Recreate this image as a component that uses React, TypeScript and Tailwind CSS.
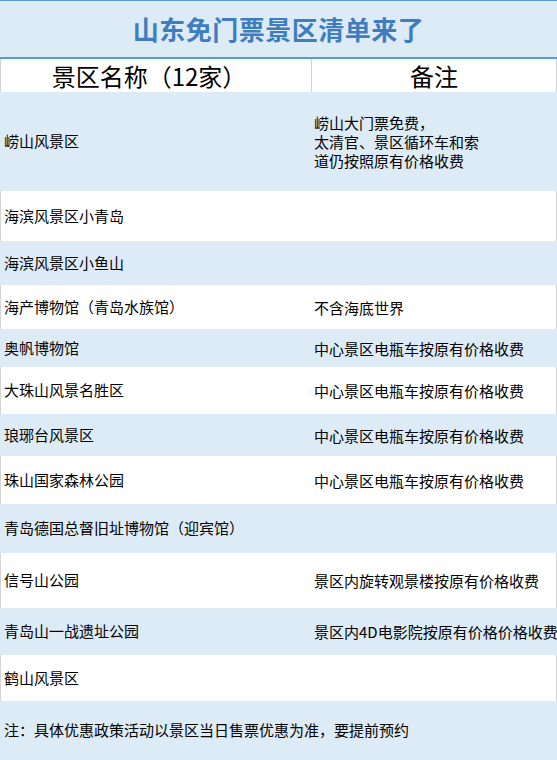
import React from "react";

interface Row {
  name: string;
  note: string[];
  h: string;
  blue: boolean;
}

const rows: Row[] = [
  {
    name: "崂山风景区",
    note: ["崂山大门票免费，", "太清官、景区循环车和索", "道仍按照原有价格收费"],
    h: "h-[99px]",
    blue: true,
  },
  { name: "海滨风景区小青岛", note: [], h: "h-[50px]", blue: false },
  { name: "海滨风景区小鱼山", note: [], h: "h-[44px]", blue: true },
  { name: "海产博物馆（青岛水族馆）", note: ["不含海底世界"], h: "h-[44px]", blue: false },
  { name: "奥帆博物馆", note: ["中心景区电瓶车按原有价格收费"], h: "h-[38px]", blue: true },
  { name: "大珠山风景名胜区", note: ["中心景区电瓶车按原有价格收费"], h: "h-[47px]", blue: false },
  { name: "琅琊台风景区", note: ["中心景区电瓶车按原有价格收费"], h: "h-[42px]", blue: true },
  { name: "珠山国家森林公园", note: ["中心景区电瓶车按原有价格收费"], h: "h-[48px]", blue: false },
  { name: "青岛德国总督旧址博物馆（迎宾馆）", note: [], h: "h-[49px]", blue: true },
  { name: "信号山公园", note: ["景区内旋转观景楼按原有价格收费"], h: "h-[55px]", blue: false },
  { name: "青岛山一战遗址公园", note: ["景区内4D电影院按原有价格价格收费"], h: "h-[47px]", blue: true },
  { name: "鹤山风景区", note: [], h: "h-[46px]", blue: false },
];

export default function App() {
  return (
    <div
      className="w-[557px] h-[760px] overflow-hidden bg-white text-black"
      style={{ fontFamily: '"Noto Sans CJK SC", "Noto Sans", sans-serif' }}
    >
      {/* 标题 */}
      <div className="h-[59px] bg-[#ddebf7] border-t border-[#5b9bd5] border-b-2 border-b-[#5b9bd5] flex items-center justify-center">
        <h1 className="text-[26px] font-bold text-[#3f7cc0] tracking-[0.5px] leading-none">
          山东免门票景区清单来了
        </h1>
      </div>

      {/* 表头 */}
      <div className="h-[33px] flex border-l border-r border-[#d4d4d4] text-[24px] leading-none">
        <div className="w-[311px] border-r border-[#d4d4d4] flex items-center justify-center pr-[14px]">
          景区名称（12家）
        </div>
        <div className="flex-1 flex items-center justify-center">备注</div>
      </div>

      {/* 数据行 */}
      {rows.map((r) => (
        <div
          key={r.name}
          className={`${r.h} flex items-center text-[15px] ${
            r.blue ? "bg-[#ddebf7] pl-[1px]" : "bg-white border-l border-r border-[#d4d4d4]"
          }`}
        >
          <div className="w-[310px] shrink-0 pl-[3px] whitespace-nowrap">{r.name}</div>
          <div className="flex-1 pl-[3px] whitespace-nowrap leading-[19px]">
            {r.note.map((n) => (
              <div key={n}>{n}</div>
            ))}
          </div>
        </div>
      ))}

      {/* 注 */}
      <div className="h-[59px] bg-[#ddebf7] flex items-center pl-[4px] text-[15px] whitespace-nowrap">
        注：具体优惠政策活动以景区当日售票优惠为准，要提前预约
      </div>
    </div>
  );
}
